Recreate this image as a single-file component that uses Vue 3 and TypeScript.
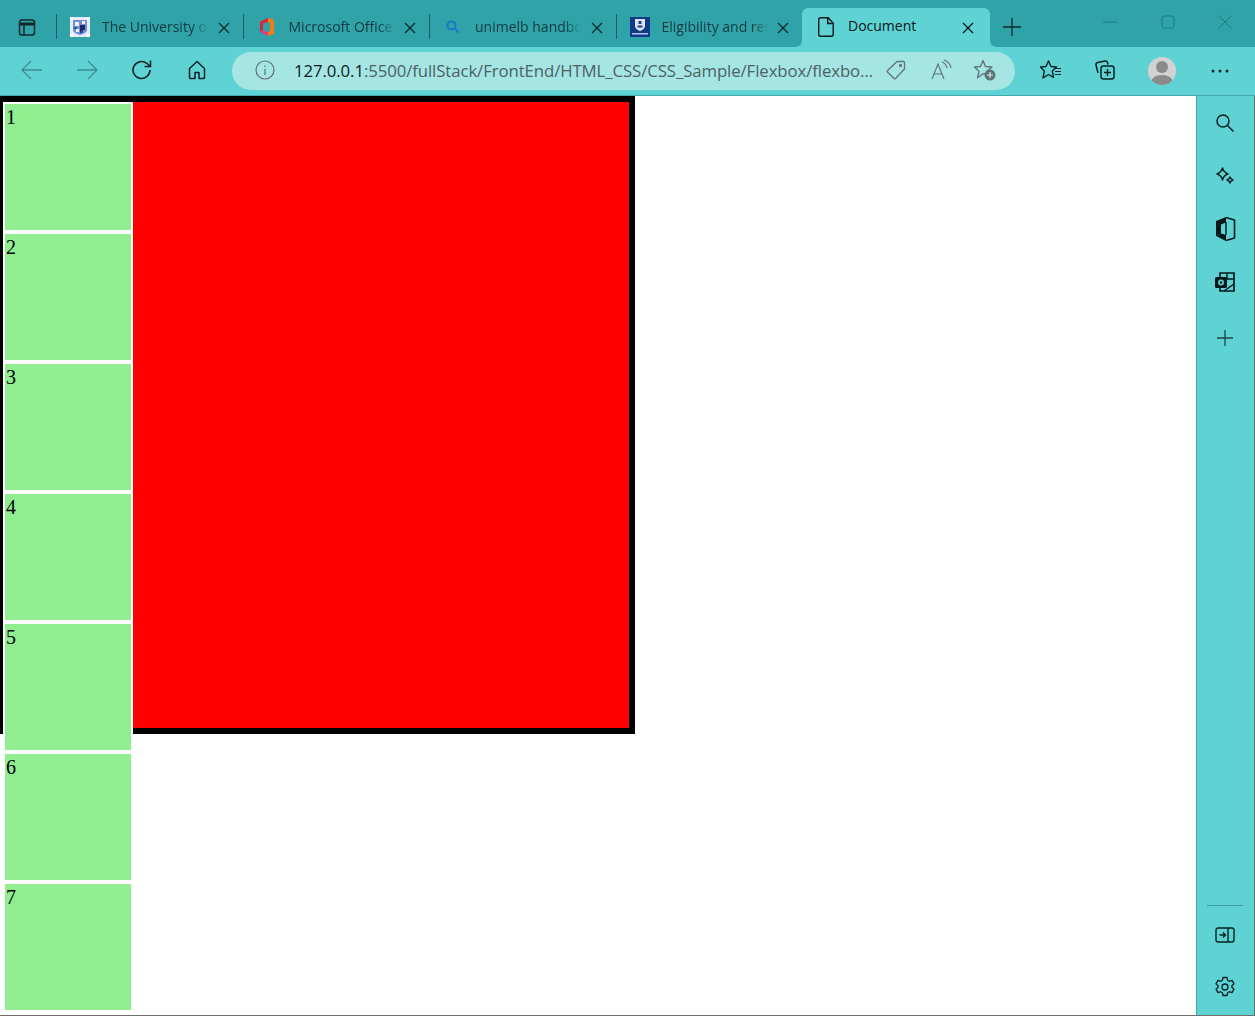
<script setup lang="ts">
interface Tab {
  title: string
  icon: string
}

const tabs: Tab[] = [
  { title: 'The University of Melbourne', icon: 'crest' },
  { title: 'Microsoft Office Home', icon: 'office' },
  { title: 'unimelb handbook', icon: 'search' },
  { title: 'Eligibility and requirements', icon: 'unimelb' },
]

const items = [1, 2, 3, 4, 5, 6, 7]
</script>

<template>
  <div class="window">
    <header class="tabbar">
      <svg class="tab-actions" width="20" height="20" viewBox="0 0 20 20" fill="none" stroke="#10282c" stroke-width="1.5">
        <rect x="2.5" y="3" width="15" height="15" rx="2.5" />
        <path d="M2.5 7h15" stroke-width="3" />
        <path d="M7 7v11" />
      </svg>
      <div class="tabs">
        <div v-for="tab in tabs" :key="tab.title" class="tab">
          <svg v-if="tab.icon === 'crest'" class="favicon" viewBox="0 0 20 20">
            <rect width="20" height="20" fill="#e6ebf8" />
            <path d="M0 0h3v3H0zM17 0h3v3h-3zM0 17h3v3H0zM17 17h3v3h-3z" fill="#fff" />
            <path d="M3 3h14v10q0 3-7 5-7-2-7-5z" fill="#6f8fd6" />
            <path d="M5 5h4v4H5zM12 4h3v3h-3zM6 12h3v3H6z" fill="#eef3ff" />
            <path d="M10 8h5v5h-2v3h-3z" fill="#1a2c66" />
            <path d="M4 10h3v2H4zM11 14h2v2h-2z" fill="#3652a8" />
          </svg>
          <svg v-else-if="tab.icon === 'office'" class="favicon" viewBox="0 0 20 20">
            <path d="M11 1 3 4.500V15l3-1.500V6.500L11 5z" fill="#d4283c" />
            <path d="M3 15l3-1.500 5 1.500v4z" fill="#e23a80" />
            <path d="M11 1l6 2v14l-6 2v-4l2-.5V5.500L11 5z" fill="#f47c14" />
          </svg>
          <svg v-else-if="tab.icon === 'search'" class="favicon" viewBox="0 0 20 20" fill="none" stroke="#1a78c8" stroke-width="2.2">
            <circle cx="8.5" cy="8.500" r="4" />
            <path d="m11.500 11.500 4 4" />
          </svg>
          <svg v-else class="favicon" viewBox="0 0 20 20">
            <rect width="20" height="20" fill="#0e3a8a" />
            <path d="M5 2h10v7q0 3-5 5-5-2-5-5z" fill="#dfe7f7" />
            <path d="M8.500 4h3v3h-3zM7.500 8.500h5v2h-5z" fill="#16408f" />
            <path d="M2 16h16v1.500H2z" fill="#b9c7e6" />
          </svg>
          <span class="tab-title">{{ tab.title }}</span>
          <svg class="close" width="12" height="12" viewBox="0 0 12 12" stroke="#10282c" stroke-width="1.3">
            <path d="m1 1 10 10M11 1 1 11" />
          </svg>
        </div>
        <div class="tab active">
          <svg class="favicon" viewBox="0 0 20 20" fill="none" stroke="#06181b" stroke-width="1.4">
            <path d="M2.700 2.700q0-2 2-2h7.500l5 5.500v11q0 2-2 2H4.700q-2 0-2-2z" />
            <path d="M11.700 .7v5.800h5.500" />
          </svg>
          <span class="tab-title plain">Document</span>
          <svg class="close" width="12" height="12" viewBox="0 0 12 12" stroke="#06181b" stroke-width="1.3">
            <path d="m1 1 10 10M11 1 1 11" />
          </svg>
        </div>
      </div>
      <svg class="new-tab" width="18" height="18" viewBox="0 0 18 18" stroke="#10282c" stroke-width="1.3">
        <path d="M9 0v18M0 9h18" />
      </svg>
      <div class="win-controls">
        <svg width="14" height="14" viewBox="0 0 14 14" stroke="#1d7a7e" stroke-width="1"><path d="M0 7h14" /></svg>
        <svg width="14" height="14" viewBox="0 0 14 14" fill="none" stroke="#1d7a7e" stroke-width="1"><rect x="1" y="1" width="12" height="12" rx="2" /></svg>
        <svg width="14" height="14" viewBox="0 0 14 14" stroke="#1d7a7e" stroke-width="1"><path d="m.5.500 13 13M13.500.500l-13 13" /></svg>
      </div>
    </header>

    <nav class="toolbar">
      <svg class="tool" width="22" height="22" viewBox="0 0 22 22" fill="none" stroke="#3f8c90" stroke-width="1.3">
        <path d="M1 11h20M10 2l-9 9 9 9" />
      </svg>
      <svg class="tool" width="22" height="22" viewBox="0 0 22 22" fill="none" stroke="#3f8c90" stroke-width="1.3">
        <path d="M1 11h20M12 2l9 9-9 9" />
      </svg>
      <svg class="tool" width="22" height="22" viewBox="0 0 22 22" fill="none" stroke="#0b2225" stroke-width="1.5">
        <path d="M19 11a8.500 8.500 0 1 1-3-6.500L19 7" />
        <path d="M19.500 1.500V7.500h-6" />
      </svg>
      <svg class="tool" width="22" height="22" viewBox="0 0 22 22" fill="none" stroke="#0b2225" stroke-width="1.5">
        <path d="M9 19.500H4.500q-1 0-1-1V9.500L11 2.500l7.500 7v9q0 1-1 1H13v-6H9z" stroke-linejoin="round" />
      </svg>
      <div class="address">
        <svg width="20" height="20" viewBox="0 0 20 20" fill="none" stroke="#5f6f70" stroke-width="1.2">
          <circle cx="10" cy="10" r="9" />
          <path d="M10 9v6M10 5.500v1.500" />
        </svg>
        <span class="url"><b>127.0.0.1</b>:5500/fullStack/FrontEnd/HTML_CSS/CSS_Sample/Flexbox/flexbo...</span>
        <svg class="addr-tag" width="22" height="22" viewBox="0 0 22 22" fill="none" stroke="#5f7475" stroke-width="1.3">
          <path d="M12 2.500h6.500q1 0 1 1V10l-9 9.500q-.7.700-1.500 0l-6.500-6.500q-.7-.8 0-1.500z" stroke-linejoin="round" />
          <circle cx="15.500" cy="6.500" r="1" />
        </svg>
        <svg class="addr-read" width="22" height="22" viewBox="0 0 22 22" fill="none" stroke="#5f7475" stroke-width="1.2">
          <path d="M2 20 8 5l6 15M4.500 15h7" />
          <path d="M12 3q4 1.500 5 6M14 1q6 2 7 8" />
        </svg>
        <svg class="addr-fav" width="24" height="24" viewBox="0 0 24 24" fill="none" stroke="#5f7475" stroke-width="1.3">
          <path d="M10 2.500 12.500 8.500l6.500.5-5 4.200 1 2.800-5-.2-5.500 4 1.500-6.500L1.500 9l6-.5z" stroke-linejoin="round" />
          <circle cx="17" cy="17" r="5.500" fill="#5f7475" stroke="none" />
          <path d="M17 14v6M14 17h6" stroke="#d5f0ef" stroke-width="1.2" />
        </svg>
      </div>
      <svg class="tool-fav" width="24" height="24" viewBox="0 0 24 24" fill="none" stroke="#0b2225" stroke-width="1.4">
        <path d="M9.500 3 12 8.500l5.500.5-4.200 4 1.200 6.500-5-3-5.500 3.500 1.300-7L1.500 9 7 8.500z" stroke-linejoin="round" />
        <path d="M16 10.500h6M16 13.500h6M16 16.500h6" stroke-width="1.1" />
      </svg>
      <svg class="tool-coll" width="24" height="24" viewBox="0 0 24 24" fill="none" stroke="#0b2225" stroke-width="1.5">
        <path d="M5 15 3 7q-.3-2 1.500-2.500L12 3q2-.2 2.500 1.500l.5 2" />
        <rect x="8" y="8" width="13" height="13" rx="2.500" />
        <path d="M14.500 11v7M11 14.500h7" />
      </svg>
      <svg class="avatar" width="28" height="28" viewBox="0 0 28 28">
        <defs>
          <clipPath id="avatar-clip"><circle cx="14" cy="14" r="14" /></clipPath>
        </defs>
        <circle cx="14" cy="14" r="14" fill="#d2d2d2" />
        <g clip-path="url(#avatar-clip)" fill="#8a8a8a">
          <circle cx="14" cy="10" r="6" />
          <ellipse cx="14" cy="25" rx="11" ry="7" />
        </g>
      </svg>
      <svg class="more" width="18" height="4" viewBox="0 0 18 4" fill="#0b2225">
        <circle cx="2" cy="2" r="1.5" />
        <circle cx="9" cy="2" r="1.5" />
        <circle cx="16" cy="2" r="1.5" />
      </svg>
    </nav>

    <div class="body">
      <main class="page">
        <div class="container">
          <div class="list">
            <div v-for="n in items" :key="n" class="item">{{ n }}</div>
          </div>
          <div class="fill"></div>
        </div>
      </main>

      <aside class="sidebar">
        <div class="side-top">
          <svg width="20" height="20" viewBox="0 0 20 20" fill="none" stroke="#0b2225" stroke-width="1.5">
            <circle cx="8" cy="8" r="6" />
            <path d="m12.500 12.500 6 6" />
          </svg>
          <svg class="s-spark" width="20" height="20" viewBox="0 0 20 20" fill="none" stroke="#0b2225" stroke-width="1.5">
            <path d="M7.500 2q1 4 5.500 6-4.500 1.500-5.500 6Q6.500 9.500 2 8q4.500-2 5.500-6z" stroke-linejoin="round" />
            <path d="M15 11q.5 2 3 3-2.500 1-3 3-.5-2-3-3 2.500-1 3-3z" stroke-linejoin="round" />
          </svg>
          <svg class="s-office" width="22" height="26" viewBox="0 0 22 26">
            <path d="M12 1.500 20.500 4v18L12 24.500" fill="none" stroke="#06181b" stroke-width="1.6" stroke-linejoin="round" />
            <path d="M12 1 2 5v15l5-2.500V8.500l5-2z" fill="#06181b" />
            <path d="M2 20l5-2.500 5 1.500v6z" fill="#06181b" />
            <path d="M12 6v13" stroke="#06181b" stroke-width="1.4" />
          </svg>
          <svg class="s-outlook" width="22" height="22" viewBox="0 0 22 22">
            <path d="M6 2h14v18H6z" fill="none" stroke="#06181b" stroke-width="1.7" />
            <path d="M6 8h14M13 2v6M10 20l10-7" fill="none" stroke="#06181b" stroke-width="1.5" />
            <rect x="1" y="6" width="12" height="11" rx="1.5" fill="#06181b" />
            <circle cx="7" cy="11.500" r="3" fill="#5fd2d3" />
            <circle cx="7" cy="11.500" r="1.300" fill="#06181b" />
          </svg>
          <svg class="s-plus" width="16" height="16" viewBox="0 0 16 16" stroke="#1c4448" stroke-width="1.3">
            <path d="M8 0v16M0 8h16" />
          </svg>
        </div>
        <div class="side-bottom">
          <div class="side-rule"></div>
          <svg class="s-panel" width="20" height="16" viewBox="0 0 20 16" fill="none" stroke="#0b2225" stroke-width="1.4">
            <rect x="1" y="1" width="18" height="14" rx="2" />
            <path d="M13 1v14M4.500 8h6M8 5.500 10.500 8 8 10.500" />
          </svg>
          <svg class="s-gear" width="22" height="22" viewBox="0 0 22 22" fill="none" stroke="#0b2225" stroke-width="1.3">
            <path d="M9 1.500h4l.6 2.800 1.700 1 2.700-.9 2 3.400-2.100 1.900v1.600l2.100 1.900-2 3.400-2.700-.9-1.700 1-.6 2.800H9l-.6-2.800-1.700-1-2.700.9-2-3.400 2.100-1.900V9.700L2 7.800l2-3.400 2.700.9 1.700-1z" stroke-linejoin="round" />
            <circle cx="11" cy="11" r="3" />
          </svg>
        </div>
      </aside>
    </div>
  </div>
</template>

<style scoped>
.window {
  width: 1255px;
  height: 1016px;
  display: flex;
  flex-direction: column;
  overflow: hidden;
  background: #5fd2d3;
  font-family: "Open Sans", "Noto Sans", sans-serif;
}
.tabbar {
  height: 47px;
  flex-shrink: 0;
  display: flex;
  align-items: flex-end;
  background: #2fa3a7;
  position: relative;
}
.tab-actions {
  margin: 0 0 10px 17px;
}
.tabs {
  display: flex;
  align-items: flex-end;
  margin-left: 19px;
}
.tab {
  width: 186.5px;
  height: 32px;
  padding: 0 13px 8px 14px;
  box-sizing: border-box;
  display: flex;
  align-items: center;
  position: relative;
  color: #123a40;
  font-size: 14px;
}
.tab::before {
  content: "";
  position: absolute;
  left: 0;
  top: 0;
  width: 1px;
  height: 25px;
  margin-top: -1px;
  background: #1d5f64;
}
.tab .close {
  margin-left: auto;
  margin-top: 2px;
  flex-shrink: 0;
}
.tab.active {
  background: #5fd2d3;
  border-radius: 6px 6px 0 0;
  width: 188px;
  height: 39px;
  color: #06181b;
  padding: 0 16px 2px 14px;
}
.tab.active::before,
.tab.active::after {
  content: "";
  position: absolute;
  bottom: 0;
  top: auto;
  width: 6px;
  height: 6px;
  margin: 0;
}
.tab.active::before {
  left: -6px;
  background: radial-gradient(circle at 0 0, #2fa3a7 5.5px, #5fd2d3 6px);
}
.tab.active::after {
  right: -6px;
  background: radial-gradient(circle at 100% 0, #2fa3a7 5.5px, #5fd2d3 6px);
}
.favicon {
  width: 20px;
  height: 20px;
  flex-shrink: 0;
}
.tab-title {
  margin-left: 12px;
  margin-bottom: 2px;
  width: 106px;
  flex-shrink: 0;
  overflow: hidden;
  white-space: nowrap;
  -webkit-mask-image: linear-gradient(90deg, #000 85%, transparent);
  mask-image: linear-gradient(90deg, #000 85%, transparent);
}
.tab-title.plain {
  -webkit-mask-image: none;
  mask-image: none;
}
.new-tab {
  margin: 0 0 11px 13px;
}
.win-controls {
  position: absolute;
  right: 23px;
  top: 15px;
  display: flex;
  gap: 43.5px;
}
.toolbar {
  height: 46px;
  padding: 0 0 2px 21px;
  flex-shrink: 0;
  display: flex;
  align-items: center;
  background: #5fd2d3;
  border-bottom: 1px solid #43a9ac;
  position: relative;
}
.toolbar .tool {
  margin-right: 33px;
}
.address {
  position: absolute;
  left: 232px;
  top: 5px;
  width: 783px;
  height: 38px;
  border-radius: 19px;
  background: #a5e6e5;
  display: flex;
  align-items: center;
  padding: 0 0 2px 23px;
  box-sizing: border-box;
  color: #4c6164;
  font-size: 16.8px;
  letter-spacing: -0.1px;
}
.url {
  margin-left: 19px;
  white-space: nowrap;
}
.url b {
  font-weight: 400;
  color: #0b1c1e;
}
.addr-tag {
  margin-left: 12px;
}
.addr-read {
  margin-left: 23px;
}
.addr-fav {
  margin-left: 21px;
}
.tool-fav,
.tool-coll,
.avatar,
.more {
  position: absolute;
}
.tool-fav {
  left: 1039px;
  top: 11px;
}
.tool-coll {
  left: 1093px;
  top: 11px;
}
.avatar {
  left: 1148px;
  top: 10px;
}
.more {
  left: 1211px;
  top: 22px;
}
.body {
  flex: 1;
  display: flex;
  min-height: 0;
}
.page {
  flex: 1;
  min-width: 0;
  background: #fff;
  border-bottom: 1px solid #6e6e6e;
  overflow: hidden;
}
.container {
  width: 635px;
  height: 638px;
  box-sizing: border-box;
  border: 6px solid #000;
  border-left-width: 3px;
  display: flex;
  align-items: flex-start;
}
.list {
  width: 130px;
  flex-shrink: 0;
  display: flex;
  flex-direction: column;
  background: #fff;
}
.item {
  width: 126px;
  height: 126px;
  margin: 2px;
  background: #90ee90;
  font-family: "Liberation Serif", serif;
  font-size: 20px;
  line-height: 26px;
  padding-left: 1px;
  box-sizing: border-box;
  color: #000;
}
.fill {
  flex: 1;
  height: 100%;
  background: #f00;
}
.sidebar {
  width: 59px;
  box-sizing: border-box;
  padding-right: 1px;
  flex-shrink: 0;
  display: flex;
  flex-direction: column;
  justify-content: space-between;
  align-items: center;
  background: #5fd2d3;
  border-left: 1px solid #43a9ac;
  border-right: 1px solid #6e6e6e;
  border-bottom: 1px solid #6e6e6e;
}
.side-top {
  display: flex;
  flex-direction: column;
  align-items: center;
  padding-top: 17px;
}
.s-spark {
  margin-top: 33px;
}
.s-office {
  margin-top: 30px;
}
.s-outlook {
  margin-top: 29px;
}
.s-plus {
  margin-top: 37px;
}
.side-bottom {
  display: flex;
  flex-direction: column;
  align-items: center;
  padding-bottom: 17px;
}
.side-rule {
  width: 36px;
  height: 1px;
  background: #3c9a9e;
}
.s-panel {
  margin-top: 21px;
}
.s-gear {
  margin-top: 33px;
}
</style>
